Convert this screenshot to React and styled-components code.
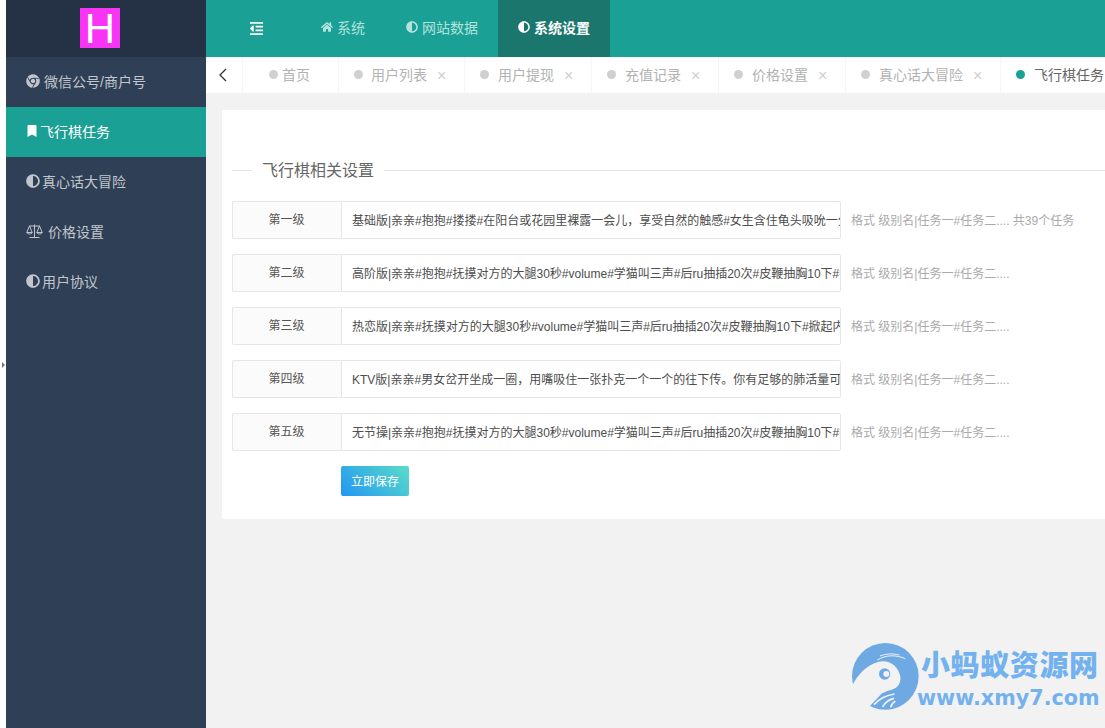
import React from "react";
import styled, { createGlobalStyle } from "styled-components";
import { FaHome, FaAdjust, FaChrome, FaBookmark, FaOutdent } from "react-icons/fa";

const Global = createGlobalStyle`
  html, body { margin: 0; padding: 0; height: 100%; overflow: hidden; background: #fff; }
  body { font-family: "Liberation Sans", "Noto Sans CJK SC", sans-serif; font-size: 14px; }
  #root { height: 100%; }
  * { box-sizing: border-box; }
`;

const Shell = styled.div`
  display: flex;
  width: 1105px;
  height: 728px;
  position: relative;
  overflow: hidden;
`;
const Gutter = styled.div`
  width: 6px;
  flex: none;
  background: #fff;
  display: flex;
  align-items: center;
`;
const GutterArrow = styled.span`
  width: 0;
  height: 0;
  margin-left: 2px;
  margin-top: 1px;
  border-left: 3px solid #777;
  border-top: 3px solid transparent;
  border-bottom: 3px solid transparent;
`;
const Sidebar = styled.aside`
  width: 200px;
  flex: none;
  background: #2f4056;
  display: flex;
  flex-direction: column;
`;
const LogoBar = styled.div`
  height: 57px;
  padding-right: 12px;
  background: #253145;
  display: flex;
  align-items: center;
  justify-content: center;
`;
const Logo = styled.div`
  width: 40px;
  height: 40px;
  margin-top: -1px;
  background: #f935f5;
  color: #fff;
  font-size: 42px;
  line-height: 41px;
  text-align: center;
  font-family: "Liberation Sans", sans-serif;
`;
const SideItem = styled.div`
  height: 50px;
  display: flex;
  align-items: center;
  padding: 0 0 2px 20px;
  gap: ${(p) => p.$gap || 3}px;
  color: ${(p) => (p.$active ? "#fff" : "#c2c6cc")};
  background: ${(p) => (p.$active ? "#1aa094" : "transparent")};
  svg { flex: none; font-size: ${(p) => p.$icon || 14}px; }
`;
const Main = styled.main`
  flex: 1;
  min-width: 0;
  display: flex;
  flex-direction: column;
  background: #f2f2f2;
  overflow: hidden;
`;
const TopBar = styled.header`
  height: 57px;
  flex: none;
  background: #1aa094;
  display: flex;
  align-items: stretch;
`;
const Fold = styled.div`
  width: 95px;
  display: flex;
  align-items: center;
  padding-left: 43px;
  color: #fff;
  font-size: 15px;
`;
const TopItem = styled.div`
  display: flex;
  align-items: center;
  gap: 4px;
  padding: 0 0 4px 20px;
  width: ${(p) => p.$w}px;
  flex: none;
  white-space: nowrap;
  font-weight: ${(p) => (p.$active ? 700 : 400)};
  color: ${(p) => (p.$active ? "#fff" : "#b4e3de")};
  background: ${(p) => (p.$active ? "#1b776e" : "transparent")};
  svg { font-size: 12px; flex: none; }
`;
const TabBar = styled.nav`
  height: 36px;
  flex: none;
  display: flex;
  background: #fff;
  overflow: hidden;
`;
const Back = styled.div`
  width: 37px;
  flex: none;
  display: flex;
  align-items: center;
  justify-content: center;
  border-right: 1px solid #f6f6f6;
  padding-right: 2px;
`;
const Tab = styled.div`
  width: ${(p) => p.$w}px;
  flex: none;
  display: flex;
  align-items: center;
  padding: 0 0 2px ${(p) => p.$pad || 15}px;
  border-right: 1px solid #f6f6f6;
  color: ${(p) => (p.$active ? "#666" : "#b2b2b2")};
  white-space: nowrap;
`;
const Dot = styled.i`
  width: 9px;
  height: 9px;
  border-radius: 50%;
  flex: none;
  margin-right: ${(p) => p.$gap || 9}px;
  background: ${(p) => (p.$active ? "#1aa094" : "#d0d0d0")};
`;
const Close = styled.span`
  margin: 3px 0 0 10px;
  color: #cfcfcf;
  font-size: 16px;
  line-height: 1;
  font-weight: 300;
`;
const Card = styled.section`
  width: 1000px;
  flex: none;
  margin: 17px 0 0 16px;
  height: 409px;
  background: #fff;
  border-radius: 2px;
  padding: 50px 0 0 10px;
`;
const Legend = styled.div`
  display: flex;
  align-items: center;
  height: 20px;
  color: #666;
  font-size: 16px;
  margin-bottom: 21px;
  &::before {
    content: "";
    width: 20px;
    height: 1px;
    background: #e6e6e6;
    margin-right: 10px;
  }
  &::after {
    content: "";
    flex: 1;
    height: 1px;
    background: #e6e6e6;
    margin-left: 10px;
  }
`;
const LegendText = styled.span`
  margin-top: -2px;
`;
const Form = styled.div`
  display: flex;
  flex-direction: column;
  gap: 15px;
`;
const Row = styled.div`
  display: flex;
  align-items: center;
  height: 38px;
`;
const Label = styled.label`
  width: 109px;
  height: 38px;
  flex: none;
  display: flex;
  align-items: center;
  justify-content: center;
  background: #fbfbfb;
  border: 1px solid #e6e6e6;
  border-right: 0;
  border-radius: 2px 0 0 2px;
  font-size: 12px;
  color: #555;
  padding: 0 1px 3px 0;
`;
const Input = styled.input`
  width: 500px;
  height: 38px;
  flex: none;
  border: 1px solid #e6e6e6;
  border-radius: 0 2px 2px 0;
  padding: 0 0 2px 10px;
  font: 12px "Liberation Sans", "Noto Sans CJK SC", sans-serif;
  color: #4d4d4d;
  outline: none;
  background: #fff;
`;
const Hint = styled.div`
  margin: 0 0 2px 10px;
  font-size: 12px;
  color: #aaa;
  white-space: nowrap;
`;
const SaveRow = styled.div`
  padding: 15px 0 0 109px;
`;
const Save = styled.button`
  width: 68px;
  height: 30px;
  border: 0;
  border-radius: 2px;
  padding: 0 0 2px;
  color: #fff;
  font: 12px "Liberation Sans", "Noto Sans CJK SC", sans-serif;
  background: linear-gradient(45deg, #2196f3 0%, #5adcc8 100%);
`;
const Watermark = styled.div`
  position: absolute;
  left: 848px;
  top: 638px;
  width: 257px;
  height: 86px;
  pointer-events: none;
`;
const Mark = styled.svg`
  display: block;
`;
const MarkTitle = styled.div`
  position: absolute;
  left: 73px;
  top: 3px;
  font-size: 29px;
  line-height: 44px;
  font-weight: 900;
  letter-spacing: 0.6px;
  color: #73b2ee;
  font-family: "Noto Sans CJK SC", sans-serif;
  white-space: nowrap;
`;
const MarkUrl = styled.div`
  position: absolute;
  left: 69px;
  top: 45px;
  font-size: 20.7px;
  line-height: 30px;
  font-weight: 700;
  color: #73b2ee;
  font-family: "DejaVu Sans", sans-serif;
  white-space: nowrap;
`;

const ScaleIcon = () => (
  <svg width="17" height="14" viewBox="0 0 17 14" fill="none" stroke="currentColor" strokeWidth="1">
    <path d="M8.5 0.5V13M3.5 13.5H13.5M3 2H14M3.5 2 0.8 8.5h5.4zM13.5 2l-2.7 6.5h5.4z" />
    <path d="M0.8 8.5c.6 2 4.8 2 5.4 0M10.8 8.5c.6 2 4.8 2 5.4 0" />
  </svg>
);

const sides = [
  { t: "微信公号/商户号", I: FaChrome, gap: 4 },
  { t: "飞行棋任务", I: FaBookmark, active: true, gap: 2, icon: 12 },
  { t: "真心话大冒险", I: FaAdjust, gap: 2 },
  { t: "价格设置", I: ScaleIcon, gap: 5 },
  { t: "用户协议", I: FaAdjust, gap: 2 },
];
const tabs = [
  { t: "首页", w: 96, pad: 26, gap: 4, noClose: true },
  { t: "用户列表", w: 126, gap: 8 },
  { t: "用户提现", w: 127 },
  { t: "充值记录", w: 127 },
  { t: "价格设置", w: 127 },
  { t: "真心话大冒险", w: 155 },
  { t: "飞行棋任务", w: 140, active: true, noClose: true },
];
const rows = [
  { l: "第一级", v: "基础版|亲亲#抱抱#搂搂#在阳台或花园里裸露一会儿，享受自然的触感#女生含住龟头吸吮一分钟#抱抱#亲亲", h: "格式 级别名|任务一#任务二.... 共39个任务" },
  { l: "第二级", v: "高阶版|亲亲#抱抱#抚摸对方的大腿30秒#volume#学猫叫三声#后ru抽插20次#皮鞭抽胸10下#掀起内衣#亲亲", h: "格式 级别名|任务一#任务二...." },
  { l: "第三级", v: "热恋版|亲亲#抚摸对方的大腿30秒#volume#学猫叫三声#后ru抽插20次#皮鞭抽胸10下#掀起内衣#亲亲抱抱", h: "格式 级别名|任务一#任务二...." },
  { l: "第四级", v: "KTV版|亲亲#男女岔开坐成一圈，用嘴吸住一张扑克一个一个的往下传。你有足够的肺活量可以继续传下去", h: "格式 级别名|任务一#任务二...." },
  { l: "第五级", v: "无节操|亲亲#抱抱#抚摸对方的大腿30秒#volume#学猫叫三声#后ru抽插20次#皮鞭抽胸10下#掀起内衣", h: "格式 级别名|任务一#任务二...." },
];

export default function App() {
  return (
    <Shell>
      <Global />
      <Gutter><GutterArrow /></Gutter>
      <Sidebar>
        <LogoBar><Logo>H</Logo></LogoBar>
        {sides.map(({ t, I, active, gap, icon }) => (
          <SideItem key={t} $active={active} $gap={gap} $icon={icon}><I />{t}</SideItem>
        ))}
      </Sidebar>
      <Main>
        <TopBar>
          <Fold><FaOutdent /></Fold>
          <TopItem $w={85}><FaHome />系统</TopItem>
          <TopItem $w={112}><FaAdjust />网站数据</TopItem>
          <TopItem $w={112} $active><FaAdjust />系统设置</TopItem>
        </TopBar>
        <TabBar>
          <Back>
            <svg width="10" height="16" viewBox="0 0 10 16" fill="none" stroke="#333" strokeWidth="1.3"><path d="M8 2 2 8l6 6" /></svg>
          </Back>
          {tabs.map((x) => (
            <Tab key={x.t} $w={x.w} $pad={x.pad} $active={x.active}>
              <Dot $active={x.active} $gap={x.gap} />
              {x.t}
              {!x.noClose && <Close>×</Close>}
            </Tab>
          ))}
        </TabBar>
        <Card>
          <Legend><LegendText>飞行棋相关设置</LegendText></Legend>
          <Form>
            {rows.map((r) => (
              <Row key={r.l}>
                <Label>{r.l}</Label>
                <Input readOnly value={r.v} />
                <Hint>{r.h}</Hint>
              </Row>
            ))}
          </Form>
          <SaveRow><Save>立即保存</Save></SaveRow>
        </Card>
      </Main>
      <Watermark>
        <Mark width="76" height="76" viewBox="0 0 228 228">
          <circle cx="112" cy="115" r="100" fill="#6fa9e4" />
          <path d="M14 140C30 110 55 82 90 72c34-9 60 12 67 43 3 25-12 40-37 43l-18 8-42 44C40 192 22 168 14 140z" fill="#f2f2f2" />
          <circle cx="110" cy="108" r="17" fill="#6fa9e4" />
          <circle cx="115" cy="108" r="9" fill="#f2f2f2" />
          <path d="M88 66c26-16 56-16 84-4M96 54c18-7 38-8 58-3" fill="none" stroke="#f2f2f2" strokeWidth="3" />
          <path d="M78 200c14-16 34-28 62-32M104 207c6-12 18-22 34-26M128 208c2-8 6-14 14-18" fill="none" stroke="#f2f2f2" strokeWidth="5" />
        </Mark>
        <MarkTitle>小蚂蚁资源网</MarkTitle>
        <MarkUrl>www.xmy7.com</MarkUrl>
      </Watermark>
    </Shell>
  );
}
